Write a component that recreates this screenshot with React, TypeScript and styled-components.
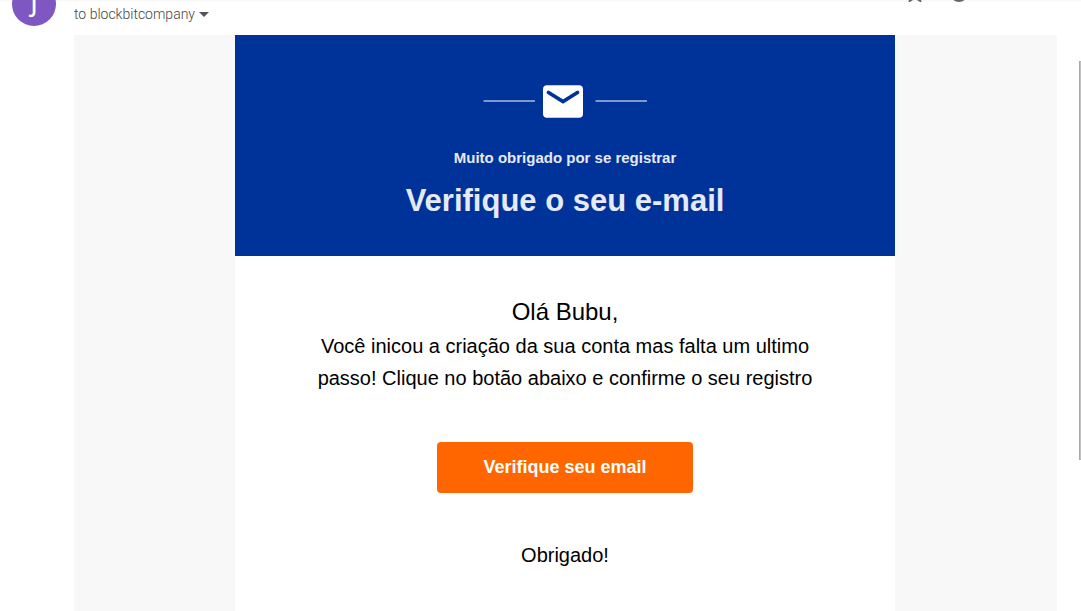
import styled, { createGlobalStyle } from "styled-components";

const GlobalStyle = createGlobalStyle`
  * { box-sizing: border-box; }
  html, body, #root { height: 100%; }
  body {
    margin: 0;
    background: #fff;
    color: #000;
    font-family: "Liberation Sans", Arial, sans-serif;
    overflow: hidden;
  }
  h1, h2, p { margin: 0; font-weight: 400; }
`;

const Page = styled.div`
  position: relative;
  display: flex;
  flex-direction: column;
  height: 100%;
  overflow: hidden;
`;

const MessageHeader = styled.header`
  display: flex;
  flex: none;
  justify-content: space-between;
  height: 35px;
  padding-left: 12px;
  padding-right: 112px;
  background: linear-gradient(#f6f6f6, #fff 2px);
  overflow: hidden;
`;

const Sender = styled.div`
  display: flex;
  gap: 18px;
`;

const Avatar = styled.div`
  width: 44px;
  height: 44px;
  margin-top: -18px;
  border-radius: 50%;
  background: #7e57c2;
  color: #fff;
  font: 600 22px/44px "Open Sans", sans-serif;
  text-align: center;
`;

const Recipient = styled.button`
  display: flex;
  align-items: center;
  gap: 4px;
  height: 28px;
  padding: 0;
  border: 0;
  background: none;
  color: #444;
  font: 300 14px/20px Roboto, sans-serif;
`;

const Actions = styled.div`
  display: flex;
  gap: 24px;
  margin-top: -18px;
`;

const IconButton = styled.button`
  width: 20px;
  height: 20px;
  padding: 0;
  border: 0;
  background: none;
  color: #666;
  svg { display: block; }
`;

const Canvas = styled.main`
  display: flex;
  flex: 1;
  justify-content: center;
  margin-left: 74px;
  margin-right: 24px;
  padding-right: 1px;
  background: #f8f8f8;
`;

const Email = styled.article`
  width: 660px;
  background: #fff;
  text-align: center;
`;

const Banner = styled.header`
  display: flex;
  flex-direction: column;
  align-items: center;
  height: 221px;
  padding-top: 46px;
  background: #003399;
  color: #e5eaf5;
`;

const Subtitle = styled.p`
  margin-top: 25px;
  font-size: 15px;
  font-weight: 700;
  line-height: 24px;
`;

const Title = styled.h1`
  margin-top: 11px;
  font-size: 31px;
  font-weight: 700;
  line-height: 40px;
`;

const Content = styled.section`
  display: flex;
  flex-direction: column;
  align-items: center;
  padding: 40px 80px;
`;

const Greeting = styled.h2`
  margin-bottom: 2px;
  font-size: 24px;
  line-height: 32px;
`;

const Text = styled.p`
  font-size: 20px;
  line-height: 32px;
`;

const VerifyButton = styled.button`
  width: 256px;
  height: 51px;
  margin: 48px 0 46px;
  padding: 0 0 2px;
  border: 0;
  border-radius: 4px;
  background: #ff6600;
  color: #fff;
  font: 700 18px/24px "Liberation Sans", Arial, sans-serif;
`;

const ScrollThumb = styled.div`
  position: absolute;
  top: 61px;
  right: 0;
  width: 2px;
  height: 399px;
  border: 1px solid #a8a8a8;
  border-right-color: #c1c1c1;
`;

const Envelope = () => (
  <svg width="164" height="40" viewBox="0 0 164 40" aria-hidden="true">
    <path d="M0.500 20H52M112.500 20H164" stroke="#8099cc" strokeWidth="2" />
    <rect x="60" y="4.300" width="40" height="32.400" rx="4" fill="#fff" />
    <path d="M65.500 11.500L80 20.500L94.500 11.500" fill="none" stroke="#003399" strokeWidth="3.800" strokeLinecap="round" />
  </svg>
);

export default function App() {
  return (
    <>
      <GlobalStyle />
      <Page>
        <MessageHeader>
          <Sender>
            <Avatar>J</Avatar>
            <Recipient type="button">
              to blockbitcompany
              <svg width="10" height="5" viewBox="0 0 10 5" aria-hidden="true">
                <path d="M0 0H10L5 5Z" fill="#555" />
              </svg>
            </Recipient>
          </Sender>
          <Actions>
            <IconButton type="button" aria-label="Star">
              <svg width="20" height="20" viewBox="0 0 20 20" fill="none" stroke="currentColor" strokeWidth="2">
                <path d="M10 2L12.500 8L18 8.500L14 12.500L15.300 19L10 15.500L4.700 19L6 12.500L2 8.500L7.500 8Z" />
              </svg>
            </IconButton>
            <IconButton type="button" aria-label="React">
              <svg width="20" height="20" viewBox="0 0 20 20" fill="none" stroke="currentColor" strokeWidth="2">
                <circle cx="10" cy="11" r="8" />
              </svg>
            </IconButton>
          </Actions>
        </MessageHeader>
        <Canvas>
          <Email>
            <Banner>
              <Envelope />
              <Subtitle>Muito obrigado por se registrar</Subtitle>
              <Title>Verifique o seu e-mail</Title>
            </Banner>
            <Content>
              <Greeting>Olá Bubu,</Greeting>
              <Text>
                Você inicou a criação da sua conta mas falta um ultimo passo! Clique no botão abaixo e confirme o seu registro
              </Text>
              <VerifyButton type="button">Verifique seu email</VerifyButton>
              <Text>Obrigado!</Text>
            </Content>
          </Email>
        </Canvas>
        <ScrollThumb />
      </Page>
    </>
  );
}
